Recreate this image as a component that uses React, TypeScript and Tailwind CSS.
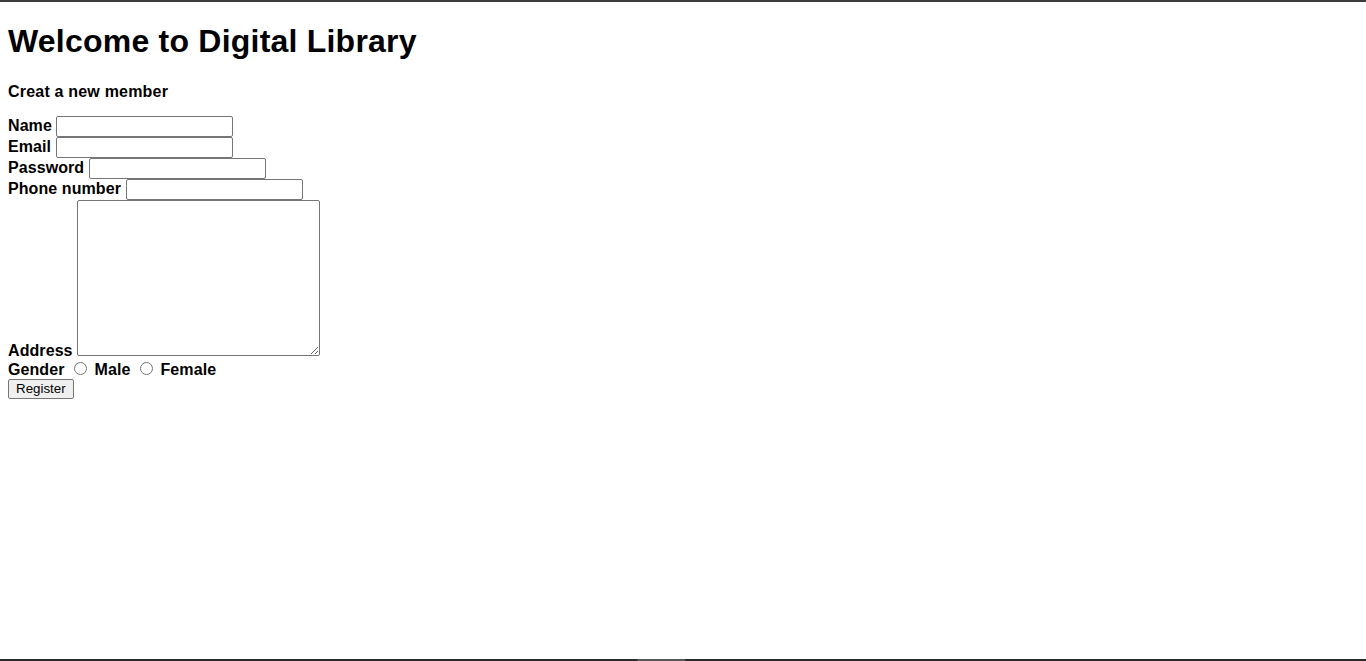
import React from 'react';

const fieldCls =
  'inline-block align-baseline h-[21px] w-[177px] border border-[#767676] rounded-[2px] bg-white px-[2px] py-[1px] text-[13.33px] font-normal leading-[normal] tracking-normal';

const radioCls = 'inline-block ml-[5px] mr-[3px] mt-[2px] w-[13px] h-[13px] align-baseline';

export default function App() {
  return (
    <div className="h-[661px] flex flex-col bg-white text-black font-['Liberation_Sans',Arial,sans-serif] leading-[normal]">
      <div className="h-[2px] bg-[#3c3c3c]" />

      <div className="flex-1 px-2">
        <h1 className="mt-[21.44px] text-[32px] font-bold leading-[normal] tracking-[0.22px]">Welcome to Digital Library</h1>
        <h4 className="mt-[22.3px] text-[16px] font-bold leading-[normal] tracking-[0.2px]">Creat a new member</h4>

        <form className="mt-[15px] text-[16px] font-bold leading-[normal] tracking-[0.08px]" onSubmit={(e) => e.preventDefault()}>
          <label>Name</label> <input type="text" className={fieldCls} />
          <br />
          <label>Email</label> <input type="email" className={fieldCls} />
          <br />
          <label>Password</label> <input type="password" className={fieldCls} />
          <br />
          <label>Phone number</label> <input type="text" className={fieldCls} />
          <br />
          <label>Address</label>{' '}
          <textarea className="inline-block align-baseline h-[156px] w-[243px] border border-[#767676] rounded-[2px] bg-white p-[2px] text-[13.33px] font-normal resize" />
          <br />
          <label>Gender</label> <input type="radio" name="gender" className={radioCls} /> <label>Male</label>{' '}
          <input type="radio" name="gender" className={radioCls} /> <label>Female</label>
          <br />
          <button
            type="submit"
            className="inline-block align-baseline h-[20px] border border-[#767676] rounded-[2px] bg-[#efefef] px-[7px] text-[13.33px] font-normal leading-[normal] tracking-normal"
          >
            Register
          </button>
        </form>
      </div>

      <div className="h-[2px] flex bg-[#2a2a2a]">
        <div className="ml-[637px] w-[48px] bg-[#575757]" />
      </div>
    </div>
  );
}
